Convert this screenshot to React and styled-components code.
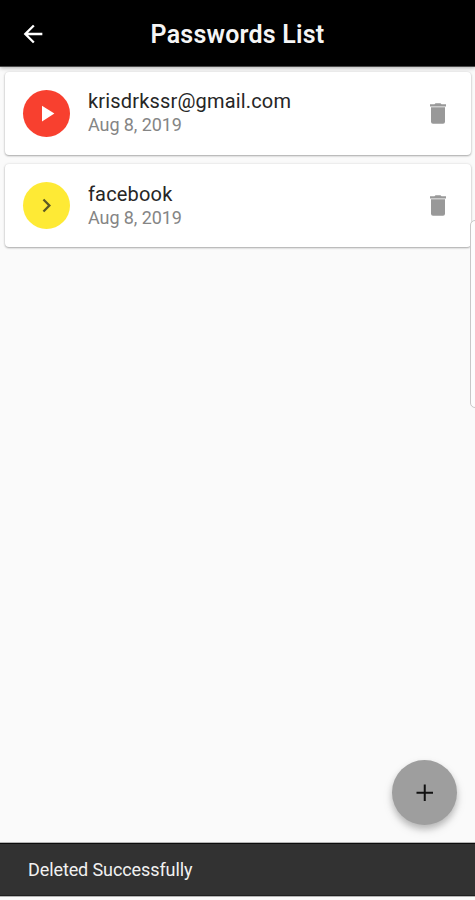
import React from "react";
import styled, { createGlobalStyle } from "styled-components";
import {
  MdArrowBack,
  MdKeyboardArrowRight,
  MdPlayArrow,
} from "react-icons/md";

const GlobalStyle = createGlobalStyle`
  * {
    box-sizing: border-box;
  }
  body {
    margin: 0;
    background: #fafafa;
    font-family: Roboto, "Liberation Sans", sans-serif;
  }
  svg {
    display: block;
  }
`;

const Screen = styled.div`
  position: relative;
  display: flex;
  flex-direction: column;
  height: 900px;
  overflow: hidden;
  background: #fafafa;
`;

const AppBar = styled.header`
  display: grid;
  grid-template-columns: 56px 1fr 56px;
  align-items: center;
  height: 67px;
  padding: 3px 0 0 0;
  background: #000;
  color: #fff;
  border-bottom: 1px solid #4a4a4a;
  box-shadow: 0 1px 4px rgba(0, 0, 0, 0.3);
`;

const BackButton = styled.div`
  padding: 0 0 1px 19px;
`;

const Title = styled.h1`
  margin: 0;
  text-align: center;
  font-size: 25px;
  line-height: 32px;
  font-weight: 600;
  letter-spacing: 0.22px;
  color: #f5f5f5;
`;

const List = styled.main`
  flex: 1;
  display: flex;
  flex-direction: column;
  gap: 9.2px;
  padding: 5px 4px 0 5px;
`;

const Card = styled.div`
  display: flex;
  align-items: center;
  height: 83px;
  padding: 0 19px 0 18px;
  background: #fff;
  border-radius: 4px;
  box-shadow: 0 1px 2px rgba(0, 0, 0, 0.3), 0 0 3px rgba(0, 0, 0, 0.1);
`;

const Avatar = styled.div`
  display: flex;
  align-items: center;
  justify-content: center;
  width: 47px;
  height: 47px;
  border-radius: 50%;
  background: ${(props) => props.$background};
  color: ${(props) => props.$color};
`;

const Details = styled.div`
  flex: 1;
  display: flex;
  flex-direction: column;
  padding: 0 0 1.2px 18px;
`;

const Name = styled.span`
  font-size: 20px;
  line-height: 24px;
  letter-spacing: 0.17px;
  color: #262626;
`;

const Created = styled.span`
  font-size: 18px;
  line-height: 23px;
  letter-spacing: -0.08px;
  color: #858585;
`;

const DeleteButton = styled.div`
  color: #999;
`;

const SidePanel = styled.div`
  position: absolute;
  top: 220px;
  right: -8px;
  width: 13px;
  height: 188px;
  background: #fdfdfd;
  border: 1px solid #c8c8c8;
  border-radius: 5px;
`;

const Fab = styled.div`
  position: absolute;
  left: 392px;
  top: 760px;
  display: flex;
  align-items: center;
  justify-content: center;
  width: 65px;
  height: 65px;
  border-radius: 50%;
  background: #9e9e9e;
  color: #111;
  box-shadow: 0 4px 6px rgba(0, 0, 0, 0.2), 0 5px 11px rgba(0, 0, 0, 0.1);
`;

const Snackbar = styled.footer`
  display: flex;
  align-items: center;
  height: 53px;
  margin-bottom: 4px;
  padding-left: 28px;
  background: #323232;
  border-top: 1px solid #0c0c0c;
  border-bottom: 1px solid #202020;
  box-shadow: 0 0 0 1px #b4b4b4;
  color: #f1f1f1;
  font-size: 18px;
  letter-spacing: -0.1px;
`;

const passwords = [
  {
    name: "krisdrkssr@gmail.com",
    created: "Aug 8, 2019",
    background: "#f8402f",
    color: "#fff",
    icon: MdPlayArrow,
  },
  {
    name: "facebook",
    created: "Aug 8, 2019",
    background: "#feea35",
    color: "#5c5924",
    icon: MdKeyboardArrowRight,
  },
];

function AddIcon() {
  return (
    <svg width="28" height="28" viewBox="0 0 28 28" fill="none">
      <path
        d="M13.75 5.5v16.5M5.5 13.75h16.5"
        stroke="currentColor"
        strokeWidth="2"
      />
    </svg>
  );
}

function TrashIcon() {
  return (
    <svg width="28" height="28" viewBox="0 0 28 28" fill="currentColor">
      <path d="M7 7.3h14v14.5q0 2-2 2H9q-2 0-2-2z" />
      <path d="M6 4.2h4.5l1-1h5l1 1H22v2.3H6z" />
    </svg>
  );
}

function PasswordItem({ item }) {
  const Icon = item.icon;
  return (
    <Card>
      <Avatar $background={item.background} $color={item.color}>
        <Icon size={27} />
      </Avatar>
      <Details>
        <Name>{item.name}</Name>
        <Created>{item.created}</Created>
      </Details>
      <DeleteButton>
        <TrashIcon />
      </DeleteButton>
    </Card>
  );
}

function App() {
  return (
    <>
      <GlobalStyle />
      <Screen>
        <AppBar>
          <BackButton>
            <MdArrowBack size={28} />
          </BackButton>
          <Title>Passwords List</Title>
        </AppBar>
        <List>
          {passwords.map((item) => (
            <PasswordItem key={item.name} item={item} />
          ))}
        </List>
        <Snackbar>Deleted Successfully</Snackbar>
        <SidePanel />
        <Fab>
          <AddIcon />
        </Fab>
      </Screen>
    </>
  );
}

export default App;
